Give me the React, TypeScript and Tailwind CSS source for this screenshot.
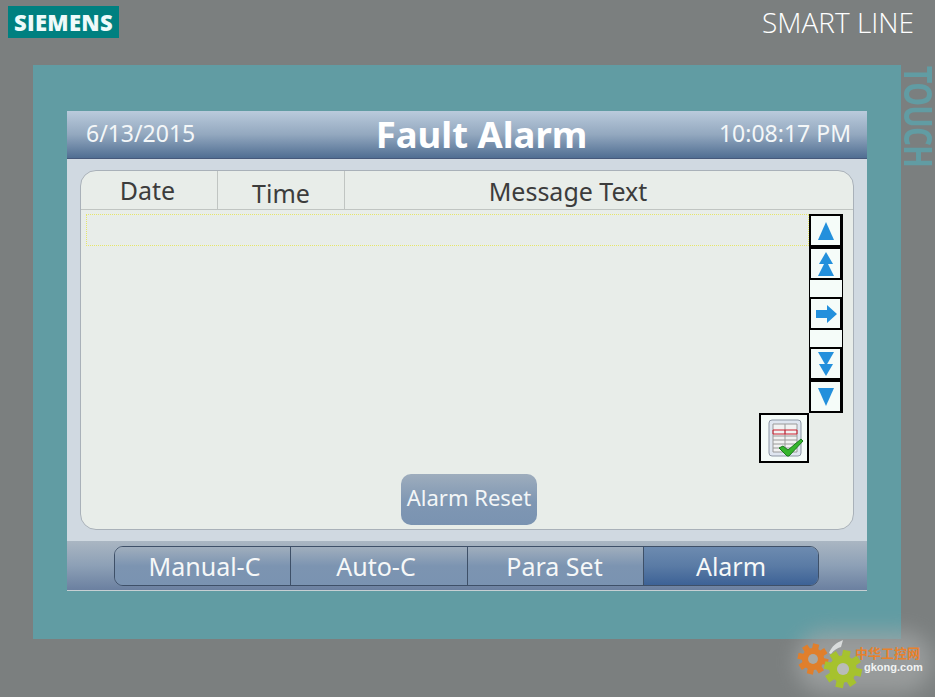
const uiFont = { fontFamily: '"Noto Sans", sans-serif' };

function Gear({ cx, cy, r, fill, hole }: { cx: number; cy: number; r: number; fill: string; hole: string }) {
  const teeth = Array.from({ length: 8 }, (_, i) => i * 45);
  return (
    <g>
      {teeth.map((a) => (
        <rect key={a} x={cx - r * 0.24} y={cy - r * 1.18} width={r * 0.48} height={r * 0.6} fill={fill} transform={`rotate(${a + 12} ${cx} ${cy})`} />
      ))}
      <circle cx={cx} cy={cy} r={r * 0.85} fill={fill} />
      <circle cx={cx} cy={cy} r={r * 0.38} fill={hole} />
    </g>
  );
}

function Arrow({ kind }: { kind: 'up' | 'upup' | 'right' | 'downdown' | 'down' }) {
  const c = '#2390dc';
  return (
    <svg width="24" height="24" viewBox="0 0 24 24">
      {kind === 'up' && <polygon points="12,3 20,21 4,21" fill={c} />}
      {kind === 'down' && <polygon points="4,3 20,3 12,21" fill={c} />}
      {kind === 'upup' && (
        <g fill={c}>
          <polygon points="12,0 19,12 5,12" />
          <polygon points="12,8 20,24 4,24" />
        </g>
      )}
      {kind === 'downdown' && (
        <g fill={c}>
          <polygon points="4,0 20,0 12,14" />
          <polygon points="5,12 19,12 12,24" />
        </g>
      )}
      {kind === 'right' && <polygon points="2,8 13,8 13,3 23,12 13,21 13,16 2,16" fill={c} />}
    </svg>
  );
}

function ScrollBtn({ kind }: { kind: 'up' | 'upup' | 'right' | 'downdown' | 'down' }) {
  return (
    <div className="h-[33px] w-[34px] border-2 border-r-[3px] border-black bg-[#f5fcf9] flex items-center justify-center">
      <Arrow kind={kind} />
    </div>
  );
}

function Tab({ label, w, active, last, shift = '' }: { label: string; w: string; active?: boolean; last?: boolean; shift?: string }) {
  return (
    <div
      className={`${w} ${shift} h-full flex items-center justify-center pt-[2px] text-[25px] text-[#f6f8f8] ${last ? '' : 'border-r border-[#3e5068]'} ${
        active ? 'bg-gradient-to-b from-[#6d8bb0] via-[#5a7ba5] via-50% to-[#3d6296]' : 'bg-gradient-to-b from-[#a0aebd] via-[#7c94b1] via-50% to-[#7a93b1]'
      }`}
    >
      {label}
    </div>
  );
}

export default function App() {
  return (
    <div className="relative w-[935px] h-[697px] overflow-hidden bg-[#7b7f7f]" style={uiFont}>
      {/* top strip */}
      <div className="h-[65px] flex items-start justify-between pl-[8px] pr-[21px]">
        <div className="mt-[6px] w-[111px] h-[32px] bg-[#008080] flex items-center justify-center text-[22px] font-extrabold text-[#eefafa] tracking-[0.3px]" style={{ fontFamily: '"Open Sans", sans-serif' }}>
          SIEMENS
        </div>
        <div className="mt-[4px] text-[28px] leading-[36px] text-white" style={{ fontFamily: '"Open Sans", sans-serif', fontWeight: 300 }}>
          SMART LINE
        </div>
      </div>

      {/* bezel */}
      <div className="ml-[33px] w-[868px] h-[574px] bg-[#619ca3] pl-[34px] pt-[46px]">
        <div className="w-[800px] h-[480px] flex flex-col bg-[#d0d9e1]">
          <div className="h-[48px] shrink-0 border-b border-[#46597a] bg-gradient-to-b from-[#bacbdc] via-[#93a8bf] via-50% to-[#506e92] flex items-center justify-between pl-[19px] pr-[16px] text-[#f4f7f8]">
            <div className="text-[23px] w-[200px] pb-[2px]">6/13/2015</div>
            <div className="text-[36.5px] font-bold text-white ml-[26px]">Fault Alarm</div>
            <div className="text-[23px] w-[200px] text-right pb-[2px]">10:08:17 PM</div>
          </div>

          <div className="h-[382px] shrink-0 pl-[13px] pt-[11px]">
            <div className="w-[774px] h-[360px] rounded-[16px] border border-[#a9b1b9] bg-[#e8ede9] overflow-hidden">
              <div className="h-[39px] flex border-b border-[#c0c5c2] text-[25px] text-[#3c3c3c]">
                <div className="w-[137px] border-r border-[#c0c5c2] flex items-center justify-center pt-[2px] pr-[3px]">Date</div>
                <div className="w-[127px] border-r border-[#c0c5c2] flex items-center justify-center pt-[8px]">Time</div>
                <div className="flex-1 flex items-center justify-center pr-[62px] pt-[3px]">Message Text</div>
              </div>

              <div className="flex pt-[4px] pl-[5px]">
                <div className="w-[723px] h-[32px] border border-dotted border-[#e6e66a]" />
                <div className="flex flex-col w-[34px]">
                  <ScrollBtn kind="up" />
                  <ScrollBtn kind="upup" />
                  <div className="h-[17px] border-x border-black bg-[#f5fcf9]" />
                  <ScrollBtn kind="right" />
                  <div className="h-[17px] border-x border-black bg-[#f5fcf9]" />
                  <ScrollBtn kind="downdown" />
                  <ScrollBtn kind="down" />
                </div>
              </div>

              <div className="flex justify-end pr-[44px]">
                <div className="w-[50px] h-[50px] border-2 border-black bg-[#f5fcf9] flex items-center justify-center">
                  <svg width="40" height="40" viewBox="0 0 40 40">
                    <rect x="5" y="2" width="32" height="36" rx="3" fill="#dfe6f0" stroke="#8d97a5" />
                    <g stroke="#9a9a9a" strokeWidth="1">
                      <path d="M9 6h24v28H9z" fill="#f1f2f2" />
                      <path d="M9 18h24M9 22h24M9 26h24M9 30h24M21 6v28" />
                    </g>
                    <path d="M9 12h24v4H9zM21 12v4" fill="none" stroke="#cc1f2f" strokeWidth="1" />
                    <path d="M15 30l4-2 5 4 13-11 2 2-14 15h-2z" fill="#35b52c" stroke="#1b7a1e" strokeWidth="1" />
                  </svg>
                </div>
              </div>

              <div className="pl-[320px] pt-[11px]">
                <div className="w-[136px] h-[51px] rounded-[10px] bg-gradient-to-b from-[#9eadbd] via-[#7f97b3] via-55% to-[#7a93b1] flex items-center justify-center pb-[5px] text-[22px] text-[#f3f6f7]">
                  Alarm Reset
                </div>
              </div>
            </div>
          </div>

          <div className="h-[50px] shrink-0 border-b border-[#c6cfd3] bg-gradient-to-b from-[#aab6c2] via-[#8da0b6] via-50% to-[#6b80a0] pl-[47px] pt-[5px]">
            <div className="w-[705px] h-[40px] rounded-[9px] border border-[#3e5068] overflow-hidden flex">
              <Tab label="Manual-C" w="w-[176px]" shift="pl-[4px]" />
              <Tab label="Auto-C" w="w-[177px]" shift="pr-[6px]" />
              <Tab label="Para Set" w="w-[176px]" shift="pr-[2px]" />
              <Tab label="Alarm" w="flex-1" active last />
            </div>
          </div>
        </div>
      </div>

      {/* vertical product label on the case */}
      <div className="absolute left-[903px] top-[66px] origin-left scale-x-[1.3] text-[30px] font-bold leading-[24px] tracking-[-1px] text-[#619ca3] [writing-mode:vertical-rl]" style={{ fontFamily: '"Open Sans", sans-serif' }}>
        TOUCH
      </div>

      {/* watermark */}
      <div className="absolute left-[790px] top-[625px] w-[145px] h-[72px]">
        <div className="absolute left-[5px] top-[6px] w-[138px] h-[62px] rounded-full bg-[#a5a8a8] blur-[10px] opacity-70" />
        <svg className="absolute left-0 top-0" width="145" height="72" viewBox="0 0 145 72">
          <path d="M39 28c3-7 7-10 14-13l-2 7c-4 1-7 3-10 7z" fill="#d9dcdc" />
          <Gear cx={23} cy={34} r={13} fill="#e07f2c" hole="#a8a9a6" />
          <Gear cx={53} cy={44} r={16} fill="#a6c22e" hole="#b9bcb8" />
        </svg>
        <div className="absolute left-[65px] top-[18px] text-[13px] leading-[20px] font-bold text-[#e8812c] whitespace-nowrap" style={{ fontFamily: '"Noto Sans CJK SC", sans-serif' }}>
          中华工控网
        </div>
        <div className="absolute left-[74px] top-[34px] text-[11px] leading-[16px] font-bold text-[#f1f3f3] whitespace-nowrap" style={{ fontFamily: '"Liberation Sans", sans-serif' }}>
          gkong.com
        </div>
      </div>
    </div>
  );
}
